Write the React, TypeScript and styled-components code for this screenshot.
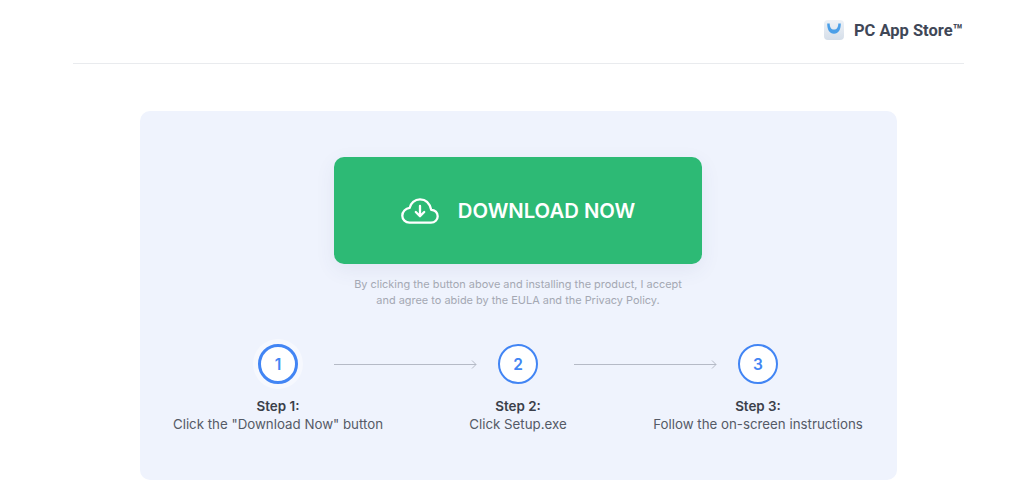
import React from 'react'
import styled, {createGlobalStyle} from 'styled-components'

const GlobalStyle = createGlobalStyle`
  * {
    box-sizing: border-box;
  }

  html, body {
    margin: 0;
    padding: 0;
    background: #fff;
    font-family: Inter, "Liberation Sans", sans-serif;
  }
`

const steps = [
    {number: 1, title: 'Step 1:', text: 'Click the "Download Now" button', active: true},
    {number: 2, title: 'Step 2:', text: 'Click Setup.exe', active: false},
    {number: 3, title: 'Step 3:', text: 'Follow the on-screen instructions', active: false},
]

const StoreLogo = () => (
    <LogoIcon viewBox="0 0 20 20" aria-hidden="true">
        <defs>
            <linearGradient id="logoBack" x1="0" y1="0" x2="0" y2="1">
                <stop offset="0" stopColor="#eef2f7" />
                <stop offset="1" stopColor="#d5dee9" />
            </linearGradient>
        </defs>
        <rect width="20" height="20" rx="4" fill="url(#logoBack)" />
        <path d="M3.200 3.500C3.200 9.500 5.500 13.800 10 13.800S16.800 9.500 16.800 3.500L14.300 3.500C14.300 7.200 12.800 9.600 10 9.600S5.700 7.200 5.700 3.500z" fill="#4b9fe8" />
    </LogoIcon>
)

const CloudIcon = () => (
    <svg width="38" height="26" viewBox="0 0 38 26" fill="none" stroke="#fff" strokeWidth="2.300" strokeLinecap="round" strokeLinejoin="round" aria-hidden="true">
        <path d="M8.500 24.700h21.500c3.900 0 6.700-3 6.700-6.400 0-3.700-2.800-6.500-6.500-6.500C28.800 5.500 24.700 1.300 19 1.300c-5.200 0-9.500 3.800-10.300 8.600C4.500 10.500 1.300 13.700 1.300 17.700c0 3.900 3.200 7 7.200 7z" />
        <path d="M19 8v10M14.800 14l4.200 4.200 4.200-4.200" />
    </svg>
)

const ArrowLine = () => (
    <Arrow viewBox="0 0 144 9" fill="none" stroke="#b4b9c6" strokeWidth="1" aria-hidden="true">
        <path d="M0 4.500h143M139 .5l4 4-4 4" />
    </Arrow>
)

export default function App() {
    return (
        <>
            <GlobalStyle />
            <Page>
                <Header>
                    <StoreLogo />
                    <Brand>PC App Store™</Brand>
                </Header>
                <Panel>
                    <DownloadButton href="#">
                        <CloudIcon />
                        <span>DOWNLOAD NOW</span>
                    </DownloadButton>
                    <Legal>
                        By clicking the button above and installing the product, I accept
                        <br />
                        and agree to abide by the EULA and the Privacy Policy.
                    </Legal>
                    <Track>
                        {steps.map((step, index) => (
                            <React.Fragment key={step.number}>
                                <Circle $active={step.active}>{step.number}</Circle>
                                {index < steps.length - 1 && <ArrowLine />}
                            </React.Fragment>
                        ))}
                    </Track>
                    <Labels>
                        {steps.map((step) => (
                            <Label key={step.number}>
                                <StepTitle>{step.title}</StepTitle>
                                <StepText>{step.text}</StepText>
                            </Label>
                        ))}
                    </Labels>
                </Panel>
            </Page>
        </>
    )
}

const Page = styled.div`
  width: 1024px;
  height: 492px;
  overflow: hidden;
  padding: 0 60px 0 73px;
`

const Header = styled.header`
  display: flex;
  align-items: center;
  justify-content: flex-end;
  gap: 10px;
  height: 64px;
  padding: 0 1px 3px 0;
  border-bottom: 1px solid #e9ebee;
`

const LogoIcon = styled.svg`
  width: 20px;
  height: 20px;
`

const Brand = styled.span`
  font-family: Roboto, "Liberation Sans", sans-serif;
  font-size: 16.5px;
  font-weight: 700;
  color: #3f4757;
`

const Panel = styled.main`
  display: flex;
  flex-direction: column;
  align-items: center;
  width: 757px;
  height: 369px;
  margin: 47px 0 0 67px;
  padding: 46px 1px 0 0;
  background: #eff3fd;
  border-radius: 10px;
`

const DownloadButton = styled.a`
  display: flex;
  align-items: center;
  justify-content: center;
  gap: 19px;
  width: 368px;
  height: 107px;
  background: #2dba75;
  border-radius: 10px;
  box-shadow: 0 6px 20px rgba(60, 80, 130, 0.08);
  color: #fff;
  font-size: 20.3px;
  font-weight: 600;
  text-decoration: none;
`

const Legal = styled.p`
  margin: 13px 0 0;
  font-size: 10.95px;
  line-height: 15.5px;
  color: #a4a8b3;
  text-align: center;
`

const Track = styled.div`
  display: flex;
  align-items: center;
  margin-top: 36px;
  height: 40px;
`

const Circle = styled.div<{$active: boolean}>`
  display: flex;
  align-items: center;
  justify-content: center;
  width: 40px;
  height: 40px;
  background: #fff;
  border-radius: 50%;
  border: ${(props) => (props.$active ? '3.5px' : '2px')} solid #4285f4;
  box-shadow: ${(props) => (props.$active ? '0 0 0 5px #f6f8fe' : 'none')};
  color: #4285f4;
  font-size: 15.5px;
  font-weight: 600;
`

const Arrow = styled.svg`
  width: 143px;
  height: 9px;
  margin: 0 21px 0 36px;
`

const Labels = styled.div`
  display: grid;
  grid-template-columns: repeat(3, 240px);
  margin-top: 13px;
`

const Label = styled.div`
  text-align: center;
`

const StepTitle = styled.div`
  font-size: 13.4px;
  font-weight: 600;
  line-height: 18px;
  color: #3b3f4a;
`

const StepText = styled.div`
  font-size: 13.3px;
  line-height: 19px;
  color: #555a66;
`
